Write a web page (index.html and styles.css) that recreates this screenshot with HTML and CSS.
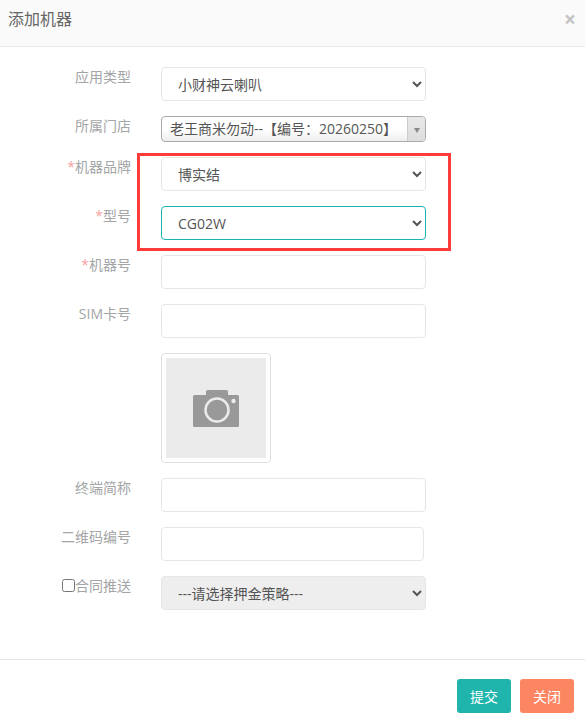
FILE: index.html
```html
<!DOCTYPE html>
<html lang="zh-CN">
<head>
    <meta charset="UTF-8">
    <meta name="viewport" content="width=device-width, initial-scale=1.0">
    <title>添加机器</title>
    <link rel="stylesheet" href="styles.css">
</head>
<body>
    <div class="modal">
        <div class="modal-header">
            <h4 class="modal-title">添加机器</h4>
            <span class="close">×</span>
        </div>
        <form class="modal-body">
            <div class="form-row">
                <label class="form-label">应用类型</label>
                <select class="form-control">
                    <option>小财神云喇叭</option>
                </select>
            </div>
            <div class="form-row">
                <label class="form-label">所属门店</label>
                <div class="combo">
                    <span class="combo-text">老王商米勿动--【编号：20260250】</span>
                    <span class="combo-btn"><i class="combo-arrow"></i></span>
                </div>
            </div>
            <div class="form-row">
                <label class="form-label"><em>*</em>机器品牌</label>
                <select class="form-control">
                    <option>博实结</option>
                </select>
            </div>
            <div class="form-row">
                <label class="form-label"><em>*</em>型号</label>
                <select class="form-control focused">
                    <option>CG02W</option>
                </select>
            </div>
            <div class="form-row">
                <label class="form-label"><em>*</em>机器号</label>
                <input class="form-control" type="text">
            </div>
            <div class="form-row">
                <label class="form-label">SIM卡号</label>
                <input class="form-control" type="text">
            </div>
            <div class="form-row">
                <span class="form-label"></span>
                <div class="thumb">
                    <div class="thumb-inner">
                        <svg width="46" height="37" viewBox="0 0 46 37">
                            <path fill="#999" d="M13 1.5A1.5 1.5 0 0 1 14.500 0H33.500A1.500 1.500 0 0 1 35 1.500V5H44.500A1.500 1.500 0 0 1 46 6.500V35.500A1.500 1.500 0 0 1 44.500 37H1.500A1.500 1.500 0 0 1 0 35.500V6.500A1.500 1.500 0 0 1 1.500 5H13Z"/>
                            <circle cx="24" cy="20" r="11.500" fill="none" stroke="#ebebeb" stroke-width="2.500"/>
                            <circle cx="40.500" cy="11" r="2.200" fill="#ebebeb"/>
                        </svg>
                    </div>
                </div>
            </div>
            <div class="form-row">
                <label class="form-label">终端简称</label>
                <input class="form-control" type="text">
            </div>
            <div class="form-row">
                <label class="form-label">二维码编号</label>
                <input class="form-control narrow" type="text">
            </div>
            <div class="form-row">
                <label class="form-label"><input class="check" type="checkbox">合同推送</label>
                <select class="form-control grey">
                    <option>---请选择押金策略---</option>
                </select>
            </div>
        </form>
        <div class="modal-footer">
            <button class="btn btn-submit" type="button">提交</button>
            <button class="btn btn-close" type="button">关闭</button>
        </div>
        <!-- red box drawn over the screenshot -->
        <div class="highlight"></div>
    </div>
</body>
</html>
```

FILE: styles.css
```css
* {
    box-sizing: border-box;
}

body {
    margin: 0;
    background-color: #fff;
    font-family: "Open Sans", "Noto Sans CJK SC", sans-serif;
    font-size: 14px;
    color: #676a6c;
}

.modal {
    position: relative;
    width: 585px;
    height: 722px;
    overflow: hidden;
}

.modal-header {
    display: flex;
    align-items: center;
    justify-content: space-between;
    height: 47px;
    padding: 0 9px 8px 8px;
    background-color: #fafafa;
    border-bottom: 1px solid #e7e7e7;
}

.modal-title {
    margin: 0;
    font-size: 16px;
    font-weight: 400;
    line-height: 22px;
    color: #666;
}

.close {
    font-size: 21px;
    font-weight: 700;
    line-height: 20px;
    color: #c4c4c4;
}

.modal-body {
    height: 613px;
    padding-top: 20px;
    border-bottom: 1px solid #e5e5e5;
}

.form-row {
    display: flex;
    align-items: flex-start;
    margin-bottom: 15px;
}

.form-label {
    flex: none;
    width: 131px;
    margin-right: 30px;
    padding-top: 0;
    line-height: 20px;
    text-align: right;
    color: #a3a5a6;
}

.form-label em {
    font-style: normal;
    color: #f5a3a3;
}

.form-control {
    display: block;
    width: 265px;
    height: 34px;
    padding: 0 12px;
    background-color: #fff;
    border: 1px solid #e5e6e7;
    border-radius: 4px;
    font-family: inherit;
    font-size: 14px;
    color: #555;
    outline: none;
}

.form-control.focused {
    border-color: #1ab3b3;
}

.form-control.narrow {
    width: 263px;
}

.form-control.grey {
    background-color: #eee;
}

.combo {
    display: flex;
    width: 265px;
    height: 26px;
    margin-bottom: 0;
    background: linear-gradient(#fff 50%, #eee);
    border: 1px solid #aaa;
    border-radius: 4px;
    line-height: 24px;
    color: #555;
}

.combo-text {
    flex: 1;
    padding-left: 8px;
    white-space: nowrap;
    overflow: hidden;
}

.combo-btn {
    display: flex;
    align-items: center;
    justify-content: center;
    width: 18px;
    background: linear-gradient(#e8e8e8, #ddd);
    border-left: 1px solid #ccc;
    border-radius: 0 3px 3px 0;
}

.combo-arrow {
    margin-top: 2px;
    border-top: 5px solid #888;
    border-left: 3px solid transparent;
    border-right: 3px solid transparent;
}

.thumb {
    width: 110px;
    height: 110px;
    padding: 4px;
    border: 1px solid #ddd;
    border-radius: 4px;
}

.thumb-inner {
    display: flex;
    align-items: center;
    justify-content: center;
    height: 100px;
    background-color: #ebebeb;
}

.check {
    width: 13px;
    height: 13px;
    margin: 0;
    vertical-align: -1px;
}

.modal-footer {
    display: flex;
    justify-content: flex-end;
    gap: 9px;
    padding: 19px 11px 0 0;
}

.btn {
    width: 54px;
    height: 34px;
    padding: 0;
    border: none;
    border-radius: 3px;
    font-family: inherit;
    font-size: 14px;
    color: #fff;
}

.btn-submit {
    background-color: #1fb5ad;
}

.btn-close {
    background-color: #fc8562;
}

.highlight {
    position: absolute;
    left: 137px;
    top: 153px;
    width: 314px;
    height: 98px;
    border: 3px solid #ff3b3b;
}
```
